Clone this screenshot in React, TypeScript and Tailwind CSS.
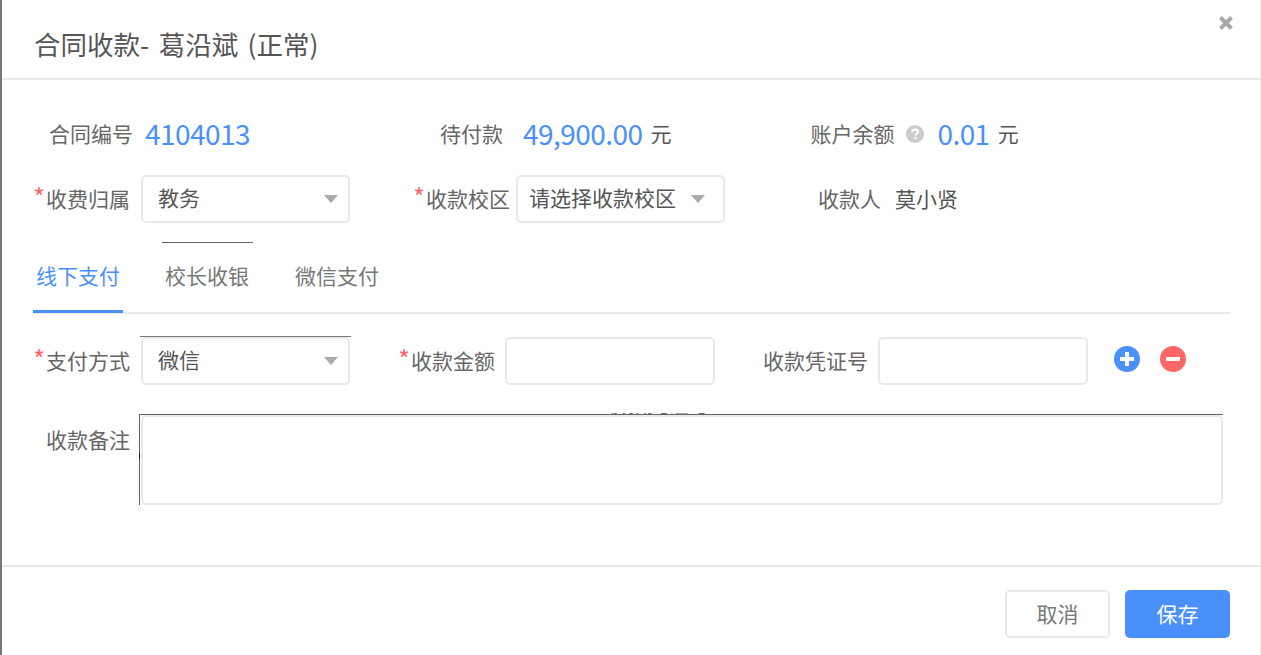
import React from "react";

const font = { fontFamily: '"Noto Sans CJK SC", "Noto Sans", sans-serif' };

function Label({ text, star, className }: { text: string; star?: boolean; className: string }) {
  return (
    <div className={`flex justify-end items-start mb-[2px] text-[21px] leading-[30px] text-[#666] shrink-0 ${className}`}>
      {star && <span className="text-[#ff6666] text-[25px] leading-[26px] mr-[1px]">*</span>}
      <span>{text}</span>
    </div>
  );
}

function Select({ text, className = "", children }: { text: string; className?: string; children?: React.ReactNode }) {
  return (
    <div className={`relative h-[48px] w-[209px] shrink-0 border-2 border-[#e9e9e9] rounded-[5px] flex items-center justify-between text-[21px] text-[#555] bg-white ${className}`}>
      <span className="mb-[2px]">{text}</span>
      <svg width="14" height="8" viewBox="0 0 14 8" className="shrink-0"><path d="M0 0h14L7 8z" fill="#aaa" /></svg>
      {children}
    </div>
  );
}

function Input({ className = "" }: { className?: string }) {
  return <input className={`h-[48px] w-[210px] shrink-0 border-2 border-[#e9e9e9] rounded-[5px] bg-white outline-none ${className}`} />;
}

export default function App() {
  return (
    <div style={font} className="w-[1261px] h-[655px] overflow-hidden flex bg-[#777]">
      <div className="w-[2px] shrink-0 bg-[#77777a]" />
      <div className="w-[1258px] shrink-0 bg-white flex flex-col">
        <header className="h-[80px] shrink-0 border-b-2 border-[#e9e9e9] flex items-start justify-between">
          <h1 className="ml-[32px] mt-[24px] text-[26.5px] leading-[40px] font-normal text-[#555] [word-spacing:3.5px]">合同收款- 葛沿斌 (正常)</h1>
          <svg width="16" height="16" viewBox="0 0 16 16" className="mt-[15px] mr-[26px]">
            <path d="M2.5 2.5l11 11M13.5 2.5l-11 11" stroke="#aaa" strokeWidth="4" />
          </svg>
        </header>

        <main className="flex-1 flex flex-col">
          <div className="flex items-center h-[40px] mt-[34px]">
            <Label text="合同编号" className="w-[131px]" />
            <span className="ml-[12px] mb-[2px] w-[278px] shrink-0 text-[28px] tracking-[-0.55px] leading-[40px] text-[#4a90fc]">4104013</span>
            <Label text="待付款" className="w-[80px]" />
            <span className="ml-[20px] mb-[2px] text-[28px] tracking-[-0.55px] leading-[40px] text-[#4a90fc]">49,900.00</span>
            <span className="ml-[8px] w-[159px] shrink-0 text-[21px] text-[#555]">元</span>
            <Label text="账户余额" className="w-[85px]" />
            <svg width="18" height="18" viewBox="0 0 18 18" className="ml-[12px] shrink-0">
              <circle cx="9" cy="9" r="9" fill="#ccc" />
              <path d="M6.2 7.2c0-1.7 1.2-2.7 2.9-2.7s2.8 1 2.8 2.3c0 1.9-2.6 2-2.6 3.8" stroke="#fff" strokeWidth="2" fill="none" />
              <rect x="8.2" y="12" width="2.2" height="2.2" fill="#fff" />
            </svg>
            <span className="ml-[13px] mb-[2px] text-[28px] tracking-[-0.55px] leading-[40px] text-[#4a90fc]">0.01</span>
            <span className="ml-[8px] text-[21px] text-[#555]">元</span>
          </div>

          <div className="flex items-center h-[48px] mt-[21px]">
            <Label text="收费归属" star className="w-[128px]" />
            <Select text="教务" className="ml-[11px] pl-[15px] pr-[10px]" />
            <Label text="收款校区" star className="w-[160px]" />
            <Select text="请选择收款校区" className="ml-[6px] pl-[11px] pr-[18px]" />
            <Label text="收款人" className="w-[156px]" />
            <span className="ml-[14px] mb-[2px] text-[21px] leading-[30px] text-[#555]">莫小贤</span>
          </div>

          <div className="ml-[160px] mt-[19px] w-[91px] h-[1px] bg-[#666]" />

          <nav className="mx-[31px] w-[1197px] mt-[17px] h-[54px] border-b-2 border-[#e9e9e9] flex text-[21px] leading-[30px] text-[#777]">
            <div className="w-[90px] h-[53px] shrink-0 border-b-[3px] border-[#4a90fc] text-[#4a90fc] text-center">线下支付</div>
            <div className="ml-[42px] w-[84px] text-center">校长收银</div>
            <div className="ml-[46px] w-[84px] text-center">微信支付</div>
          </nav>

          <div className="mt-[23px] flex items-center h-[48px]">
            <Label text="支付方式" star className="w-[128px]" />
            <Select text="微信" className="ml-[11px] pl-[15px] pr-[10px]">
              <div className="absolute -top-[3px] -left-[3px] -right-[3px] h-px bg-[#777]" />
            </Select>
            <Label text="收款金额" star className="w-[145px]" />
            <Input className="ml-[10px]" />
            <Label text="收款凭证号" className="w-[153px]" />
            <Input className="ml-[10px]" />
            <button className="ml-[26px] mb-[4px] w-[26px] h-[26px]">
              <svg width="26" height="26" viewBox="0 0 26 26"><circle cx="13" cy="13" r="13" fill="#4a90fc" /><path d="M13 6v14M6 13h14" stroke="#fff" strokeWidth="4" /></svg>
            </button>
            <button className="ml-[20px] mb-[4px] w-[26px] h-[26px]">
              <svg width="26" height="26" viewBox="0 0 26 26"><circle cx="13" cy="13" r="13" fill="#ff6666" /><path d="M6 13h14" stroke="#fff" strokeWidth="4" /></svg>
            </button>
          </div>

          <div className="mt-[29px] flex items-start">
            <Label text="收款备注" className="w-[128px] mt-[10px]" />
            <div className="relative ml-[9px] border-l border-t border-[#666] pl-px w-[1084px] shrink-0">
              <textarea className="block w-full h-[90px] border-2 border-[#e9e9e9] rounded-[5px] bg-white outline-none resize-none" />
              <div className="absolute left-[465px] -top-[2px] h-[2px] w-[106px] overflow-hidden text-[21px] leading-[30px] text-[#666]">
                <div className="-mt-[25px]">收款凭证号</div>
              </div>
              <div className="absolute -left-px top-[38px] w-px h-[6px] bg-[#222]" />
            </div>
          </div>
        </main>

        <footer className="h-[90px] shrink-0 border-t-2 border-[#e9e9e9] flex justify-end items-start pt-[23px] pr-[30px] gap-[15px]">
          <button className="w-[105px] h-[48px] border-2 border-[#e9e9e9] rounded-[5px] bg-white text-[21px] text-[#777]">取消</button>
          <button className="w-[105px] h-[48px] rounded-[5px] bg-[#4a90fc] text-[21px] text-white">保存</button>
        </footer>
      </div>
      <div className="w-[1px] shrink-0 bg-[#ececec]" />
    </div>
  );
}
